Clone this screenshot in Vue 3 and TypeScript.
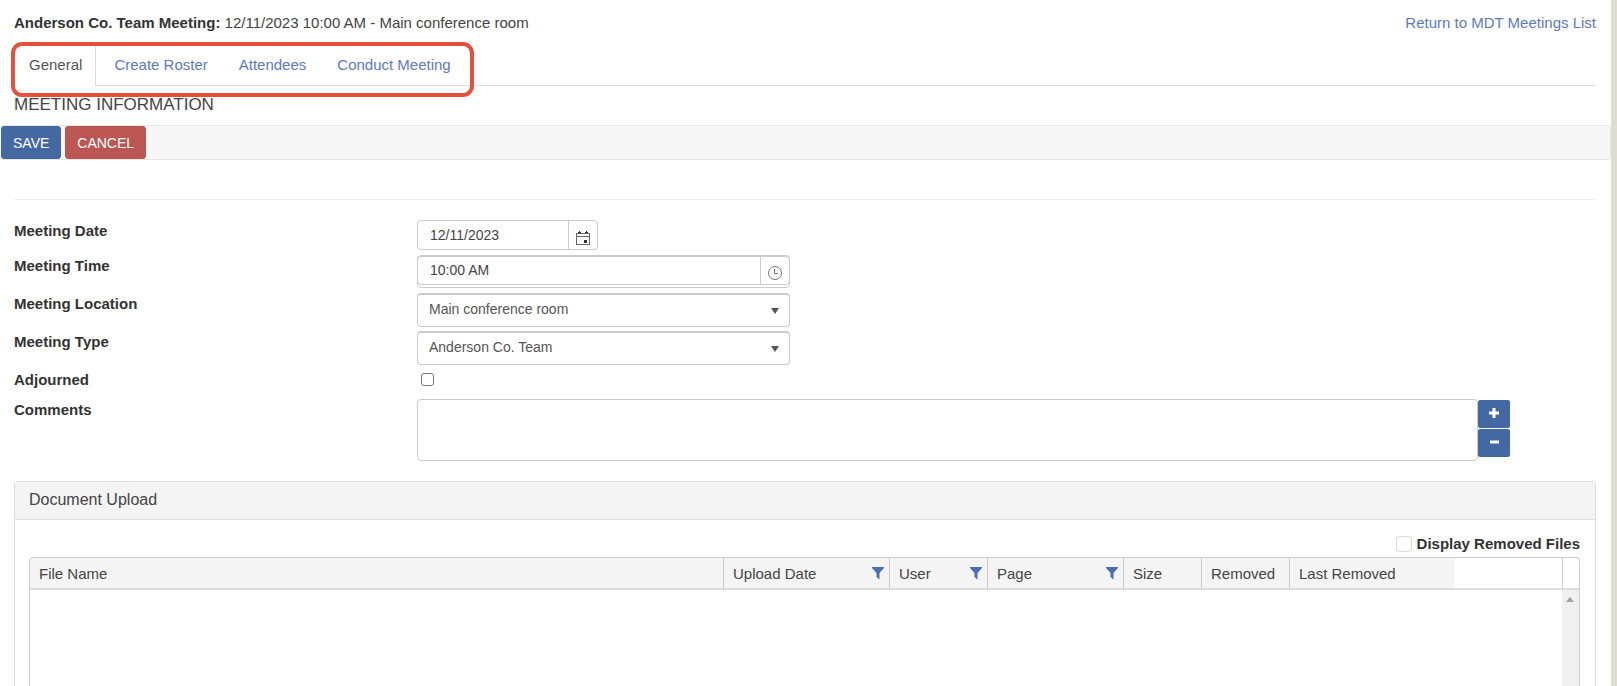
<script setup lang="ts">
import { ref } from 'vue'

interface Column {
  title: string
  key: string
  filter?: boolean
}

const tabs = ['General', 'Create Roster', 'Attendees', 'Conduct Meeting']
const activeTab = ref('General')

const meetingDate = ref('12/11/2023')
const meetingTime = ref('10:00 AM')
const location = ref('Main conference room')
const meetingType = ref('Anderson Co. Team')
const adjourned = ref(false)
const comments = ref('')
const showRemoved = ref(false)

const columns: Column[] = [
  { title: 'File Name', key: 'col-file' },
  { title: 'Upload Date', key: 'col-date', filter: true },
  { title: 'User', key: 'col-user', filter: true },
  { title: 'Page', key: 'col-page', filter: true },
  { title: 'Size', key: 'col-size' },
  { title: 'Removed', key: 'col-removed' },
  { title: 'Last Removed', key: 'col-last' },
]
</script>

<template>
  <div class="page">
    <header class="top">
      <div><strong>Anderson Co. Team Meeting:</strong> 12/11/2023 10:00 AM - Main conference room</div>
      <a href="#">Return to MDT Meetings List</a>
    </header>

    <nav class="tabs">
      <a
        v-for="tab in tabs"
        :key="tab"
        href="#"
        class="tab"
        :class="{ active: tab === activeTab }"
        @click.prevent="activeTab = tab"
      >{{ tab }}</a>
      <span class="highlight"></span>
    </nav>

    <h1 class="heading">MEETING INFORMATION</h1>

    <div class="toolbar">
      <button type="button" class="btn save">SAVE</button>
      <button type="button" class="btn cancel">CANCEL</button>
    </div>

    <form class="form" @submit.prevent>
      <div class="row row-date">
        <label for="date">Meeting Date</label>
        <div class="picker date">
          <input id="date" v-model="meetingDate" type="text" />
          <button type="button" aria-label="Open calendar">
            <svg width="16" height="16" viewBox="0 0 16 16">
              <path d="M1 3h14v12H1zM2 4v2h12V4zM2 7v7h12V7z" fill="#666" fill-rule="evenodd" />
              <path d="M4 1h1v1h1v1H3V2h1zM11 1h1v1h1v1h-3V2h1zM9 10h3v3H9z" fill="#333" />
            </svg>
          </button>
        </div>
      </div>

      <div class="row row-time">
        <label for="time">Meeting Time</label>
        <div class="time-frame">
          <div class="picker">
            <input id="time" v-model="meetingTime" type="text" />
            <button type="button" aria-label="Open time list">
              <svg width="16" height="16" viewBox="0 0 16 16" fill="none" stroke="#777">
                <circle cx="8" cy="8" r="6.500" />
                <path d="M7.500 4v4.500H11" />
              </svg>
            </button>
          </div>
        </div>
      </div>

      <div class="row">
        <label for="location">Meeting Location</label>
        <div class="select">
          <select id="location" v-model="location">
            <option>Main conference room</option>
          </select>
          <svg width="8" height="6" viewBox="0 0 8 6"><path d="M0 0h8L4 6z" fill="#555" /></svg>
        </div>
      </div>

      <div class="row">
        <label for="type">Meeting Type</label>
        <div class="select">
          <select id="type" v-model="meetingType">
            <option>Anderson Co. Team</option>
          </select>
          <svg width="8" height="6" viewBox="0 0 8 6"><path d="M0 0h8L4 6z" fill="#555" /></svg>
        </div>
      </div>

      <div class="row row-check">
        <label for="adjourned">Adjourned</label>
        <input id="adjourned" v-model="adjourned" class="check small" type="checkbox" />
      </div>

      <div class="row row-comments">
        <label for="comments">Comments</label>
        <div class="comments">
          <textarea id="comments" v-model="comments"></textarea>
          <div class="resize">
            <button type="button" aria-label="Expand comments">
              <svg width="12" height="12" viewBox="0 0 12 12"><path d="M4.500 1h3v3.500H11v3H7.500V11h-3V7.500H1v-3h3.500z" fill="#fff" /></svg>
            </button>
            <button type="button" aria-label="Shrink comments">
              <svg width="12" height="12" viewBox="0 0 12 12"><path d="M2 4.500h9v3H2z" fill="#fff" /></svg>
            </button>
          </div>
        </div>
      </div>
    </form>

    <section class="panel">
      <h2>Document Upload</h2>
      <div class="panel-body">
        <label class="removed-toggle">
          <input v-model="showRemoved" class="check" type="checkbox" />
          Display Removed Files
        </label>
        <div class="grid">
          <table>
            <thead>
              <tr>
                <th v-for="col in columns" :key="col.key" :class="col.key">
                  <div class="th">
                    {{ col.title }}
                    <svg v-if="col.filter" width="12" height="13" viewBox="0 0 12 13">
                      <path d="M0 0h12v1L7.500 6v6.500L4.500 10V6L0 1z" fill="#4a6fb5" />
                    </svg>
                  </div>
                </th>
                <td class="col-actions"></td>
                <td class="col-gutter"></td>
              </tr>
            </thead>
          </table>
          <div class="grid-body">
            <div class="scroll">
              <svg width="8" height="5" viewBox="0 0 8 5"><path d="M0 5h8L4 0z" fill="#a0a0a0" /></svg>
            </div>
          </div>
        </div>
      </div>
    </section>
  </div>
</template>

<style>
body {
  margin: 0;
  overflow: hidden;
}
</style>

<style scoped>
* {
  box-sizing: border-box;
}

.page {
  display: flex;
  flex-direction: column;
  height: 100vh;
  min-height: 600px;
  border-right: 6px solid #dedbcf;
  background: #fff;
  color: #444;
  font: 15px/20px "Liberation Sans", Arial, sans-serif;
}

button,
input,
select,
textarea {
  margin: 0;
  font-family: inherit;
}

strong,
label {
  color: #333;
  font-weight: bold;
}

a {
  color: #5e7abf;
  text-decoration: none;
}

.top {
  display: flex;
  justify-content: space-between;
  padding: 13px 15px 12px 14px;
}

.tabs {
  position: relative;
  display: flex;
  gap: 1px;
  height: 41px;
  margin: 0 15px 0 14px;
  border-bottom: 1px solid #ddd;
}

.tab {
  height: 41px;
  padding: 10px 15px;
}

.tab.active {
  padding-right: 13px;
  margin-right: 2px;
  border-right: 1px solid #ddd;
  background: #fff;
  color: #555;
}

/* Rounded callout around the tab strip */
.highlight {
  position: absolute;
  top: -3px;
  left: -3px;
  width: 463px;
  height: 55px;
  border: 4px solid #e5503c;
  border-radius: 11px;
  pointer-events: none;
}

.heading {
  margin: 9px 14px 10px;
  font-size: 17px;
  font-weight: normal;
  line-height: 20px;
}

.toolbar {
  display: flex;
  gap: 4px;
  height: 35px;
  border: 1px solid #e5e5e5;
  border-left: 0;
  border-radius: 4px;
  background: #f7f7f7;
  padding-left: 1px;
}

.btn {
  height: 33px;
  padding: 0 11px;
  border: 1px solid #4468a2;
  border-radius: 3px;
  background: #4468a2;
  color: #fff;
  font-size: 14px;
}

.cancel {
  border-color: #bc5653;
  background: #bc5653;
}

.form {
  margin: 39px 15px 0 14px;
  padding-top: 20px;
  border-top: 1px solid #eee;
}

.row {
  display: grid;
  grid-template-columns: 403fr 1179fr;
  align-items: start;
  height: 38px;
}

.row > label {
  padding-top: 1px;
}

.row-date {
  height: 35px;
}

.row-check {
  height: 30px;
}

.row-comments {
  height: auto;
}

.picker {
  display: flex;
  height: 30px;
  border: 1px solid #ccc;
  border-radius: 4px;
}

.date {
  width: 181px;
}

.picker input {
  flex: 1;
  min-width: 0;
  padding: 0 12px;
  border: 0;
  background: none;
  color: #444;
  font-size: 14px;
}

.picker button {
  display: flex;
  align-items: flex-end;
  justify-content: center;
  width: 29px;
  padding: 0 0 3px;
  border: 0;
  border-left: 1px solid #ccc;
  background: none;
}

.time-frame {
  width: 373px;
  max-width: 100%;
  height: 33px;
  border: 1px solid #ccc;
  border-radius: 4px;
}

.time-frame .picker {
  height: 29px;
  margin: 0 -1px;
}

.time-frame input {
  padding-bottom: 2px;
}

.select {
  position: relative;
  width: 373px;
  max-width: 100%;
}

.select select {
  display: block;
  width: 100%;
  height: 34px;
  padding: 0 24px 3px 11px;
  appearance: none;
  border: 1px solid #ccc;
  border-top-width: 2px;
  border-radius: 4px;
  background: #fff;
  color: #555;
  font-size: 14px;
}

.select svg {
  position: absolute;
  top: 15px;
  right: 11px;
  pointer-events: none;
}

.check {
  width: 16px;
  height: 16px;
  appearance: none;
  border: 1px solid #ccc;
  border-radius: 3px;
  background: #fff;
}

.small {
  width: 13px;
  height: 13px;
  margin: 4px;
  border-color: #777;
}

.comments {
  display: flex;
}

.comments textarea {
  width: 90%;
  height: 62px;
  border: 1px solid #ccc;
  border-radius: 4px;
  resize: none;
}

.resize {
  display: flex;
  flex-direction: column;
  gap: 1px;
  padding-top: 1px;
}

.resize button {
  width: 32px;
  height: 28px;
  padding: 0;
  border: 1px solid #4468a2;
  border-radius: 2px;
  background: #4468a2;
}

.panel {
  display: flex;
  flex: 1;
  flex-direction: column;
  margin: 20px 15px 0 14px;
  border: 1px solid #ddd;
  border-bottom: 0;
  border-radius: 4px 4px 0 0;
}

.panel h2 {
  margin: 0;
  padding: 8px 15px 9px 14px;
  border-bottom: 1px solid #ddd;
  background: #f4f4f4;
  font-size: 16px;
  font-weight: normal;
  line-height: 20px;
}

.panel-body {
  display: flex;
  flex: 1;
  flex-direction: column;
  padding: 14px 15px 0 14px;
}

.removed-toggle {
  display: flex;
  align-items: center;
  gap: 5px;
  align-self: flex-end;
  margin-bottom: 3px;
}

.removed-toggle .check {
  border-color: #ddd;
}

.grid {
  display: flex;
  flex: 1;
  flex-direction: column;
  border: 1px solid #ccc;
  border-bottom: 0;
  border-radius: 4px 4px 0 0;
  overflow: hidden;
}

table {
  width: 100%;
  border-collapse: separate;
  border-spacing: 0;
  table-layout: fixed;
}

th,
td {
  height: 32px;
  padding: 1px 5px 0 9px;
  border-bottom: 2px solid #ddd;
}

th {
  background: #f4f4f4;
  font-weight: normal;
  text-align: left;
}

th + th,
.col-gutter {
  border-left: 1px solid #ccc;
}

.th {
  display: flex;
  align-items: center;
  justify-content: space-between;
  white-space: nowrap;
}

.col-date { width: 166px; }
.col-user { width: 98px; }
.col-page { width: 136px; }
.col-size { width: 78px; }
.col-removed { width: 88px; }
.col-last { width: 166px; }
.col-actions { width: 107px; }
.col-gutter {
  width: 17px;
  padding: 0;
}

.grid-body {
  display: flex;
  flex: 1;
  justify-content: flex-end;
}

.scroll {
  width: 17px;
  padding: 7px 0 0 4px;
  background: #f0f0f0;
}

.scroll svg {
  display: block;
}
</style>
